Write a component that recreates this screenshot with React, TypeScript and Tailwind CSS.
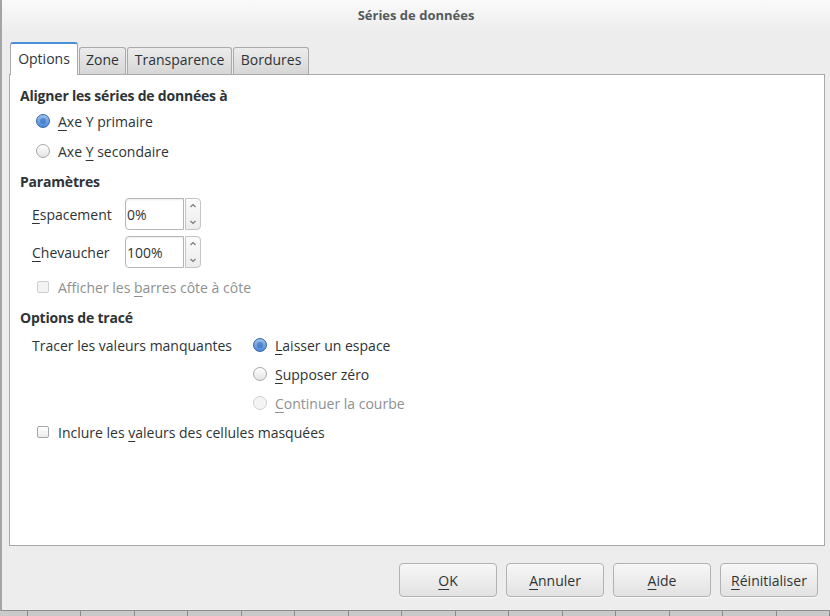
import React from 'react'

const font = { fontFamily: '"Open Sans", "Noto Sans", sans-serif' }

const Mn = ({ c }: { c: string }) => (
  <span className="underline underline-offset-[3px] decoration-1">{c}</span>
)

const Radio = ({ checked, disabled }: { checked?: boolean; disabled?: boolean }) =>
  checked ? (
    <span className="w-[14px] h-[14px] rounded-full border border-[#3465a4] bg-gradient-to-b from-[#9cc0ee] to-[#4a88d6] flex items-center justify-center shrink-0">
      <span className="w-[6px] h-[6px] rounded-full bg-[#2f66b0] opacity-50" />
    </span>
  ) : (
    <span
      className={
        disabled
          ? 'w-[14px] h-[14px] rounded-full border border-[#cfcfcf] bg-[#f4f4f4] shrink-0'
          : 'w-[14px] h-[14px] rounded-full border border-[#a8a8a8] bg-gradient-to-b from-white to-[#e4e4e4] shrink-0'
      }
    />
  )

const Check = ({ disabled }: { disabled?: boolean }) => (
  <span
    className={
      disabled
        ? 'w-[12px] h-[12px] rounded-[2px] border border-[#cdcdcd] bg-[#f3f3f3] shrink-0'
        : 'w-[12px] h-[12px] rounded-[2px] border border-[#a6a6a6] bg-gradient-to-b from-white to-[#ececec] shrink-0'
    }
  />
)

const Spin = ({ value }: { value: string }) => (
  <div className="flex h-[32px]">
    <div className="w-[59px] h-full rounded-l-[4px] border border-[#b6b6b6] bg-white flex items-center pl-[1px] text-[#2e3436] shadow-[inset_0_1px_2px_rgba(0,0,0,0.08)]">
      {value}
    </div>
    <div className="w-[16px] h-full ml-[1px] rounded-r-[4px] border border-[#c4c4c4] bg-gradient-to-b from-[#fbfbfb] to-[#ececec] flex items-center justify-center">
      <svg width="8" height="26" viewBox="0 0 8 26" fill="none" stroke="#7a7a7a" strokeWidth="1.2">
        <path d="M1.5 6 L4 3.5 L6.5 6" />
        <path d="M1.5 20 L4 22.5 L6.5 20" />
      </svg>
    </div>
  </div>
)

const Tab = ({ label, active, w }: { label: string; active?: boolean; w: string }) =>
  active ? (
    <div
      className={`${w} h-[33px] pb-[2px] bg-white border border-b-0 border-[#a9a9a9] border-t-2 border-t-[#4a90d9] rounded-t-[3px] flex items-center justify-center text-[#2e3436] relative z-10 -mb-px`}
    >
      {label}
    </div>
  ) : (
    <div
      className={`${w} h-[27px] pb-[3px] bg-gradient-to-b from-[#ececec] to-[#d6d6d6] border border-b-0 border-[#aaaaaa] rounded-t-[3px] flex items-center justify-center text-[#2e3436]`}
    >
      {label}
    </div>
  )

const Button = ({ children }: { children: React.ReactNode }) => (
  <div className="w-[98px] h-[34px] rounded-[4px] border border-[#b2b2b2] bg-gradient-to-b from-[#f7f7f7] to-[#e2e2e2] flex items-center justify-center text-[#2e3436] shadow-[0_1px_0_rgba(255,255,255,0.8)]">
    {children}
  </div>
)

const cols = [29, 56, 56, 56, 56, 56, 56, 56, 56, 56, 56, 56, 56, 56, 56, 56]

export default function App() {
  return (
    <div className="w-[830px] h-[616px] overflow-hidden flex flex-col bg-[#cfcfcf] text-[14px]" style={font}>
      <div className="h-[611px] flex flex-col bg-[#ededed] border-l-2 border-[#a4a4a4] border-b border-b-[#8f8f8f]">
        {/* title bar */}
        <div className="h-[31px] shrink-0 bg-gradient-to-b from-[#fafafa] to-[#ededed] flex items-center justify-center font-bold text-[13px] text-[#555a5c]">
          Séries de données
        </div>

        {/* tabs */}
        <div className="flex items-end mt-[11px] ml-[8px] gap-[1px]">
          <Tab label="Options" active w="w-[68px]" />
          <Tab label="Zone" w="w-[47px]" />
          <Tab label="Transparence" w="w-[105px]" />
          <Tab label="Bordures" w="w-[76px]" />
        </div>

        {/* panel */}
        <div className="ml-[7px] w-[816px] h-[472px] bg-white border border-[#a9a9a9] flex flex-col pl-[10px] text-[#2e3436]">
          <div className="h-[20px] mt-[10px] flex items-center font-bold tracking-[-0.2px]">Aligner les séries de données à</div>
          <div className="h-[20px] mt-[6px] ml-[16px] flex items-center gap-[8px]">
            <Radio checked />
            <span>
              <Mn c="A" />xe Y primaire
            </span>
          </div>
          <div className="h-[20px] mt-[10px] ml-[16px] flex items-center gap-[8px]">
            <Radio />
            <span>
              Axe <Mn c="Y" /> secondaire
            </span>
          </div>

          <div className="h-[20px] mt-[10px] flex items-center font-bold tracking-[-0.2px]">Paramètres</div>
          <div className="h-[32px] mt-[7px] ml-[12px] flex items-center">
            <span className="w-[93px]">
              <Mn c="E" />spacement
            </span>
            <Spin value="0%" />
          </div>
          <div className="h-[32px] mt-[6px] ml-[12px] flex items-center">
            <span className="w-[93px]">
              <Mn c="C" />hevaucher
            </span>
            <Spin value="100%" />
          </div>
          <div className="h-[20px] mt-[9px] ml-[17px] flex items-center gap-[9px] text-[#8d9091]">
            <Check disabled />
            <span>
              Afficher les <Mn c="b" />arres côte à côte
            </span>
          </div>

          <div className="h-[20px] mt-[10px] flex items-center font-bold tracking-[-0.2px]">Options de tracé</div>
          <div className="mt-[8px] ml-[12px] flex">
            <span className="w-[221px] h-[20px] flex items-center">Tracer les valeurs manquantes</span>
            <div className="flex flex-col gap-[9px]">
              <div className="h-[20px] flex items-center gap-[8px]">
                <Radio checked />
                <span>
                  <Mn c="L" />aisser un espace
                </span>
              </div>
              <div className="h-[20px] flex items-center gap-[8px]">
                <Radio />
                <span>
                  <Mn c="S" />upposer zéro
                </span>
              </div>
              <div className="h-[20px] flex items-center gap-[8px] text-[#8d9091]">
                <Radio disabled />
                <span>
                  <Mn c="C" />ontinuer la courbe
                </span>
              </div>
            </div>
          </div>
          <div className="h-[20px] mt-[9px] ml-[17px] flex items-center gap-[9px]">
            <Check />
            <span>
              Inclure les <Mn c="v" />aleurs des cellules masquées
            </span>
          </div>
        </div>

        {/* buttons */}
        <div className="flex justify-end gap-[9px] mt-[17px] pr-[12px]">
          <Button>
            <Mn c="O" />K
          </Button>
          <Button>
            <Mn c="A" />nnuler
          </Button>
          <Button>
            <Mn c="A" />ide
          </Button>
          <Button>
            <Mn c="R" />éinitialiser
          </Button>
        </div>
      </div>

      {/* sheet behind the dialog */}
      <div className="flex-1 flex bg-[#c9c9c9]">
        {cols.map((w, i) => (
          <div key={i} className="h-full border-r border-[#8a8a8a]" style={{ width: w }} />
        ))}
      </div>
    </div>
  )
}
